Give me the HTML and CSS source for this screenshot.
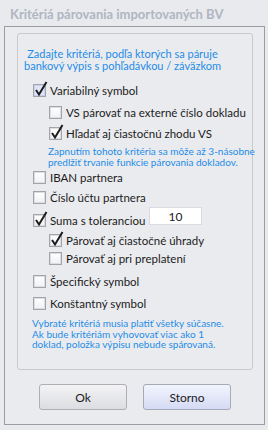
FILE: index.html
```html
<!DOCTYPE html>
<html lang="sk">
<head>
  <meta charset="UTF-8">
  <title>Kritériá párovania importovaných BV</title>
  <link rel="stylesheet" href="styles.css">
</head>
<body>
  <div class="window">
    <div class="title">Kritériá párovania importovaných BV</div>
    <div class="frame">
      <div class="group">
        <div class="info">Zadajte kritériá, podľa ktorých sa páruje<br>bankový výpis s pohľadávkou / záväzkom</div>

        <label class="row r-vs"><span class="box focus checked"></span>Variabilný symbol</label>
        <label class="row sub r-ext"><span class="box"></span>VS párovať na externé číslo dokladu</label>
        <label class="row sub r-part"><span class="box checked"></span>Hľadať aj čiastočnú zhodu VS</label>
        <div class="note">Zapnutím tohoto kritéria sa môže až 3-násobne<br>predlžiť trvanie funkcie párovania dokladov.</div>

        <label class="row r-iban"><span class="box"></span>IBAN partnera</label>
        <label class="row r-ucet"><span class="box"></span>Číslo účtu partnera</label>
        <div class="row r-suma">
          <label class="inline"><span class="box checked"></span>Suma s toleranciou</label>
          <input class="tol" type="text" value="10">
        </div>
        <label class="row sub r-uhr"><span class="box checked"></span>Párovať aj čiastočné úhrady</label>
        <label class="row sub r-prep"><span class="box"></span>Párovať aj pri preplatení</label>

        <label class="row r-spec"><span class="box"></span>Špecifický symbol</label>
        <label class="row r-konst"><span class="box"></span>Konštantný symbol</label>

        <div class="footnote">Vybraté kritériá musia platiť všetky súčasne.<br>Ak bude kritériám vyhovovať viac ako 1<br>doklad, položka výpisu nebude spárovaná.</div>
      </div>

      <div class="buttons">
        <button class="btn">Ok</button>
        <button class="btn default">Storno</button>
      </div>
    </div>
  </div>

  <script>
    // draw the check mark into every checked box
    const tick = '<svg width="15" height="16" viewBox="0 0 15 16"><path d="M3 9 L6 13.5 L13.5 1" fill="none" stroke="#1c1c1c" stroke-width="2"/></svg>';
    document.querySelectorAll('.box.checked').forEach(b => { b.innerHTML = tick; });
  </script>
</body>
</html>
```

FILE: styles.css
```css
body {
  margin: 0;
  background-color: #e9eaee;
  font-family: Lato, 'Liberation Sans', sans-serif;
  color: #1b1b1b;
}
.window {
  width: 268px;
  height: 430px;
  display: flex;
  flex-direction: column;
}
.title {
  height: 26px;
  line-height: 28px;
  padding-left: 10px;
  font-size: 13px;
  font-weight: bold;
  color: #afb6c2;
  white-space: nowrap;
}
.frame {
  margin: 0 3px 5px 4px;
  flex: 1;
  border: 1px solid #9c9ca2;
  background-color: #eaebef;
  padding: 6px 11px 0 12px;
}
.group {
  border: 1px solid #c9cacf;
  border-radius: 3px;
  height: 337px;
  padding: 14px 0 0 15px;
  box-sizing: border-box;
}
.info {
  font-size: 11px;
  line-height: 12px;
  color: #1e8be6;
  text-align: center;
  white-space: nowrap;
  padding-right: 30px;
  margin-left: -10px;
  margin-bottom: 8px;
}
.row {
  display: flex;
  align-items: center;
  height: 20px;
  font-size: 11.5px;
  white-space: nowrap;
}
.inline {
  display: flex;
  align-items: center;
  width: 116px;
}
.sub {
  padding-left: 16px;
}
.r-ext { margin-top: 2px; }
.r-part { margin-top: 1px; }
.r-suma { margin-top: 3px; }
.r-prep { margin-top: -2px; }
.r-spec { margin-top: 3px; }
.r-konst { margin-top: 2px; }
.box {
  position: relative;
  width: 11px;
  height: 11px;
  border: 1px solid #a3a4aa;
  background: linear-gradient(#ffffff, #f1f1f4);
  box-shadow: inset 0 0 0 1px #dcdde2;
  margin-right: 4px;
  flex-shrink: 0;
}
.box.focus {
  background: #dfe4f6;
  box-shadow: inset 0 0 0 1px #c9d0ec;
}
.box svg {
  position: absolute;
  left: -1px;
  top: -4px;
}
.note {
  font-size: 10px;
  line-height: 10.5px;
  color: #1e8be6;
  white-space: nowrap;
  padding-left: 15px;
  margin: 3px 0 0;
}
.tol {
  margin-top: -8px;
  width: 51px;
  height: 16px;
  padding: 0;
  border: 1px solid #dadbe0;
  background-color: #ffffff;
  font-family: Lato, 'Liberation Sans', sans-serif;
  font-size: 12px;
  text-align: center;
  color: #1b1b1b;
}
.footnote {
  font-size: 10px;
  line-height: 10.5px;
  color: #1e8be6;
  white-space: nowrap;
  margin: 5px 0 0 -1px;
}
.buttons {
  display: flex;
  justify-content: center;
  gap: 16px;
  margin-top: 14px;
}
.btn {
  width: 88px;
  height: 26px;
  border: 1px solid #aeafb4;
  border-radius: 3px;
  background: linear-gradient(#f3f3f5, #dcdde1);
  font-family: Lato, 'Liberation Sans', sans-serif;
  font-size: 12px;
  color: #1b1b1b;
  padding: 0;
}
.btn.default {
  border-color: #a7a9b5;
  background: linear-gradient(#f2f4fd, #d5dbf4);
}
```
